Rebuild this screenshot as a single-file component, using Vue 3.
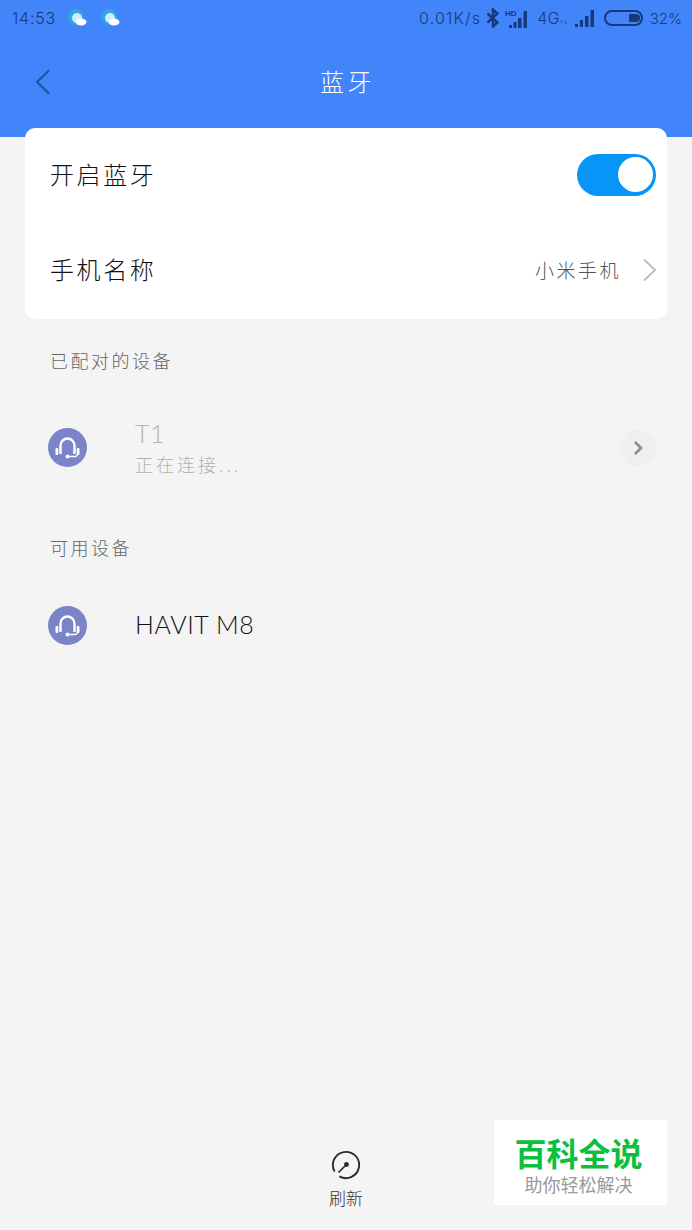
<script setup>
const cjk = '小米手机'
const groups = [
  { title: '已配对的设备', devices: [{ name: 'T1', sub: '正在连接...', off: true }] },
  { title: '可用设备', devices: [{ name: 'HAVIT M8' }] }
]
</script>

<template>
  <div class="page">
    <header class="top">
      <div class="status">
        <span class="time">14:53</span>
        <svg v-for="n in 2" :key="n" class="bubble" width="19" height="18" viewBox="0 0 19 18">
          <circle cx="8" cy="8" r="8" fill="#2fa6e8" />
          <circle cx="9" cy="9" r="5" fill="#cdeefc" />
          <ellipse cx="13" cy="13" rx="5.500" ry="3.500" fill="#fff" />
        </svg>
        <span class="spacer"></span>
        <span class="speed">0.01K/s</span>
        <svg class="bt" width="14" height="20" viewBox="0 0 14 20" fill="none" stroke="#17397c" stroke-width="2.400">
          <path d="M1.500 5.500l10 9-4.500 4V1.500l4.500 4-10 9" />
        </svg>
        <svg class="hd-ic" width="24" height="21" viewBox="0 0 24 21">
          <text x="0" y="8" class="hd">HD</text>
          <path fill="#17397c" d="M4 17h3v3H4zM8.500 14h3v6h-3zM13 10h3.500v10H13zM18.500 3H22v17h-3.500z" />
        </svg>
        <span class="net">4G<small>↑↓</small></span>
        <svg class="sig" width="19" height="19" viewBox="0 0 19 19">
          <path fill="#17397c" d="M0 15h3v3H0zM5 11h3v7H5zM10 7h3.500v11H10zM15.500 1H19v17h-3.500z" />
        </svg>
        <svg class="batt" width="39" height="18" viewBox="0 0 39 18">
          <rect x="1" y="2" width="37" height="14" rx="7" fill="none" stroke="#17397c" stroke-width="2" />
          <path fill="#17397c" d="M25 5h7a4 4 0 0 1 0 8h-7z" />
        </svg>
        <span class="pct">32%</span>
      </div>
      <div class="nav">
        <svg class="back" width="16" height="26" viewBox="0 0 16 26" fill="none" stroke="#1f4f9f" stroke-width="2">
          <path d="M14 1.500L2 13l12 11.500" />
        </svg>
        <h1>蓝牙</h1>
      </div>
    </header>

    <section class="card">
      <div class="row">
        <span class="label">开启蓝牙</span>
        <div class="switch"><i></i></div>
      </div>
      <div class="row">
        <span class="label">手机名称</span>
        <span class="value">{{ cjk }}</span>
        <svg class="chev" width="15" height="24" viewBox="0 0 15 24" fill="none" stroke="#bdbdbd" stroke-width="2">
          <path d="M2 1.500L13 12 2 22.500" />
        </svg>
      </div>
    </section>

    <section v-for="g in groups" :key="g.title" class="group">
      <h2>{{ g.title }}</h2>
      <div v-for="d in g.devices" :key="d.name" class="device">
        <svg class="avatar" width="39" height="39" viewBox="0 0 39 39">
          <circle cx="19.500" cy="19.500" r="19.500" fill="#7b84c8" />
          <path d="M12.500 26v-8.500a7 7 0 0 1 14 0V26" fill="none" stroke="#fff" stroke-width="2.400" />
          <rect x="7.500" y="20" width="2.800" height="7" rx="1" fill="#fff" />
          <rect x="28.700" y="20" width="2.800" height="7" rx="1" fill="#fff" />
          <path d="M20 28.500h7a2.500 2.500 0 0 0 2.500-2.500" fill="none" stroke="#fff" stroke-width="1.400" />
          <circle cx="19.500" cy="28.500" r="1.900" fill="#fff" />
        </svg>
        <div class="info" :class="{ off: d.off }">
          <div class="name">{{ d.name }}</div>
          <div v-if="d.sub" class="sub">{{ d.sub }}</div>
        </div>
        <span v-if="d.off" class="more">
          <svg width="10" height="16" viewBox="0 0 10 16" fill="none" stroke="#8a8a8a" stroke-width="2.500">
            <path d="M2 2l6 6-6 6" />
          </svg>
        </span>
      </div>
    </section>

    <footer class="bottom">
      <div class="refresh">
        <svg width="30" height="30" viewBox="0 0 32 32" fill="none" stroke="#2b2b2b" stroke-width="2">
          <path d="M3.900 23A14 14 0 1 1 9 28.100" />
          <path d="M8 24l8-8" stroke-width="1.800" />
          <circle cx="16.500" cy="15.500" r="2.600" fill="#2b2b2b" stroke="none" />
        </svg>
        <span>刷新</span>
      </div>
      <div class="mark">
        <b>百科全说</b>
        <span>助你轻松解决</span>
      </div>
    </footer>
  </div>
</template>

<style>
body { background: #f4f4f4; }
</style>

<style scoped>
.page {
  width: 692px;
  height: 1230px;
  display: flex;
  flex-direction: column;
  background: #f4f4f4;
  font-family: "Noto Sans", "Noto Sans CJK SC", sans-serif;
  overflow: hidden;
}
.top {
  height: 137px;
  flex: none;
  background: #4285fb;
}
.status {
  height: 36px;
  display: flex;
  align-items: center;
  padding: 0 10px 0 12px;
  color: #17397c;
  font-family: Inter, sans-serif;
  font-size: 16px;
  font-weight: 300;
}
.time { margin-right: 12px; letter-spacing: 0.8px; }
.bubble { margin-right: 14px; flex: none; }
.spacer { flex: 1; }
.speed { margin-right: 5px; letter-spacing: 1.200px; }
.bt { margin-right: 5px; flex: none; }
.hd-ic { margin-right: 8px; flex: none; }
.hd { font: 700 8px "Liberation Sans", sans-serif; fill: #17397c; }
.net { margin-right: 7px; white-space: nowrap; }
.net small { font-size: 5px; }
.sig { margin-right: 10px; flex: none; }
.batt { margin-right: 7px; flex: none; }
.pct { font-size: 15px; }
.nav {
  height: 92px;
  position: relative;
  display: flex;
  align-items: center;
  justify-content: center;
}
.back {
  position: absolute;
  left: 35px;
  top: 33px;
}
.nav h1 {
  margin: 0;
  color: #fff;
  font-size: 24px;
  font-weight: 300;
  letter-spacing: 3.500px;
  padding-left: 3px;
  line-height: 1;
}
.card {
  margin: -9px 25px 0;
  height: 191px;
  flex: none;
  background: #fff;
  border-radius: 10px;
  display: flex;
  flex-direction: column;
  padding: 0 11px 0 25px;
  position: relative;
}
.row {
  display: flex;
  align-items: center;
  height: 98px;
}
.row:first-child { height: 93px; }
.label {
  font-size: 24px;
  font-weight: 300;
  letter-spacing: 2.600px;
  color: #111;
  flex: 1;
  line-height: 1;
}
.switch {
  width: 79px;
  height: 42px;
  border-radius: 21px;
  background: #0796f8;
  display: flex;
  justify-content: flex-end;
  align-items: center;
  padding-right: 3px;
  box-sizing: border-box;
}
.switch i {
  width: 35px;
  height: 35px;
  border-radius: 50%;
  background: #fff;
}
.value {
  font-size: 19px;
  font-weight: 300;
  letter-spacing: 2.500px;
  color: #555;
  margin-right: 21px;
}
.chev { margin-right: -1px; }
.group { flex: none; }
.group h2 {
  margin: 0;
  padding-left: 50px;
  font-size: 18px;
  font-weight: 300;
  letter-spacing: 2.500px;
  color: #666;
  line-height: 20px;
}
.group:nth-of-type(2) { padding-top: 32px; }
.group:nth-of-type(3) { padding-top: 43px; }
.device {
  display: flex;
  align-items: center;
  padding: 0 36px 0 48px;
  height: 95px;
  margin-top: 29px;
}
.group:nth-of-type(3) .device { margin-top: 20px; }
.avatar { flex: none; margin-right: 48px; }
.info { flex: 1; }
.info:not(.off) .name { padding-bottom: 4px; }
.name {
  font-family: Lato, sans-serif;
  font-size: 25px;
  letter-spacing: 0.6px;
  color: #111;
  line-height: 30px;
  font-weight: 300;
}
.off .name { color: #b3b3b3; }
.sub {
  font-size: 18px;
  font-weight: 300;
  letter-spacing: 3px;
  color: #b0b0b0;
  line-height: 24px;
  margin-top: 5px;
}
.more {
  width: 36px;
  height: 36px;
  border-radius: 50%;
  background: #efefef;
  display: flex;
  align-items: center;
  justify-content: center;
}
.bottom {
  flex: 1;
  position: relative;
  display: flex;
  justify-content: center;
  align-items: flex-end;
  padding-bottom: 21px;
}
.refresh {
  display: flex;
  flex-direction: column;
  align-items: center;
  gap: 9px;
  font-size: 17px;
  font-weight: 300;
  color: #333;
  line-height: 20px;
}
.refresh svg { display: block; }
.mark {
  position: absolute;
  right: 25px;
  bottom: 25px;
  width: 173px;
  height: 85px;
  background: #fff;
  display: flex;
  flex-direction: column;
  align-items: center;
  padding: 17px 4px 0 0;
  box-sizing: border-box;
}
.mark b {
  font-size: 32px;
  line-height: 34px;
  margin-bottom: 3px;
  color: #0cc03e;
  font-weight: 700;
}
.mark span {
  font-size: 18px;
  line-height: 22px;
  color: #999;
}
</style>
